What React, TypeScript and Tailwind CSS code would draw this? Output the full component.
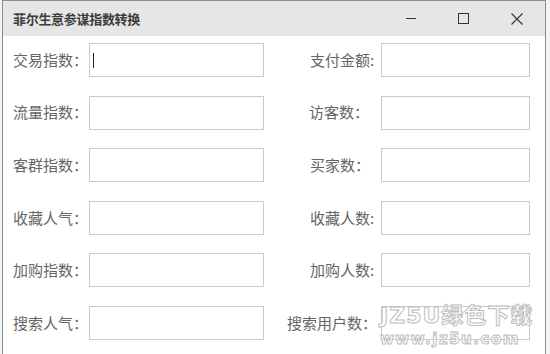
import React from 'react';

/* ── Form rows: [left label, right label, right label offset] ───────── */
const ROWS: { left: string; right: string; pad: string }[] = [
  { left: '交易指数：', right: '支付金额:', pad: 'pl-[46px]' },
  { left: '流量指数：', right: '访客数：', pad: 'pl-[45px]' },
  { left: '客群指数：', right: '买家数：', pad: 'pl-[46px]' },
  { left: '收藏人气：', right: '收藏人数:', pad: 'pl-[46px]' },
  { left: '加购指数：', right: '加购人数:', pad: 'pl-[46px]' },
  { left: '搜索人气：', right: '搜索用户数：', pad: 'pl-[23px]' },
];

const FONT = "font-['Microsoft_YaHei','Noto_Sans_CJK_SC',sans-serif]";

function TitleBar() {
  return (
    <div className="flex h-[35px] items-center bg-[#e6e6e6]">
      <span className={`${FONT} ml-[10px] text-[13px] font-bold tracking-[-0.3px] text-[#3c3c3c]`}>
        菲尔生意参谋指数转换
      </span>
      <div className="ml-auto flex h-full items-center">
        {/* minimize */}
        <div className="flex h-full w-[46px] items-center justify-center">
          <div className="h-px w-[10px] bg-[#333]" />
        </div>
        {/* maximize */}
        <div className="ml-[6px] flex h-full w-[46px] items-center justify-center">
          <div className="h-[11px] w-[11px] border border-[#333]" />
        </div>
        {/* close */}
        <div className="ml-[8px] mr-[5px] flex h-full w-[46px] items-center justify-center">
          <svg width="12" height="12" viewBox="0 0 12 12">
            <path d="M0.5 0.5L11.5 11.5M11.5 0.5L0.5 11.5" stroke="#333" strokeWidth="1.1" />
          </svg>
        </div>
      </div>
    </div>
  );
}

function Field({ w, cursor }: { w: string; cursor?: boolean }) {
  return (
    <div className={`relative h-[34px] ${w} border border-[#c9c9d2] bg-white`}>
      {cursor && <div className="absolute left-[3px] top-[9px] h-[15px] w-px bg-[#222]" />}
    </div>
  );
}

export default function App() {
  return (
    <div className="relative h-[354px] w-[550px] overflow-hidden bg-[#f4f4f4]">
      <div className="ml-[2px] h-[360px] w-[544px] border-l border-r border-t border-[#8c8c8c] bg-white">
        <TitleBar />

        <div className={`${FONT} flex flex-col gap-y-[18.6px] pt-[7px] text-[15px] text-[#666]`}>
          {ROWS.map((r, i) => (
            <div key={i} className="flex items-center">
              <span className="w-[86px] whitespace-nowrap pl-[10px]">{r.left}</span>
              <Field w="w-[175px]" cursor={i === 0} />
              <span className={`w-[117px] whitespace-nowrap ${r.pad}`}>{r.right}</span>
              <Field w="w-[149px]" />
            </div>
          ))}
        </div>
      </div>

      {/* site watermark */}
      <div className="pointer-events-none absolute left-[380px] top-[305px] flex flex-col items-start leading-none">
        <span className="whitespace-nowrap font-['DejaVu_Sans','Noto_Sans_CJK_SC',sans-serif] text-[22px] font-bold tracking-[1px] text-white/80 [-webkit-text-stroke:1px_#bdbdbd]">
          JZ5U绿色下载
        </span>
        <span className="mt-[5px] whitespace-nowrap font-['DejaVu_Sans',sans-serif] text-[15px] font-bold tracking-[1.5px] text-white/80 [-webkit-text-stroke:1px_#bdbdbd]">
          www.jz5u.com
        </span>
      </div>
    </div>
  );
}
